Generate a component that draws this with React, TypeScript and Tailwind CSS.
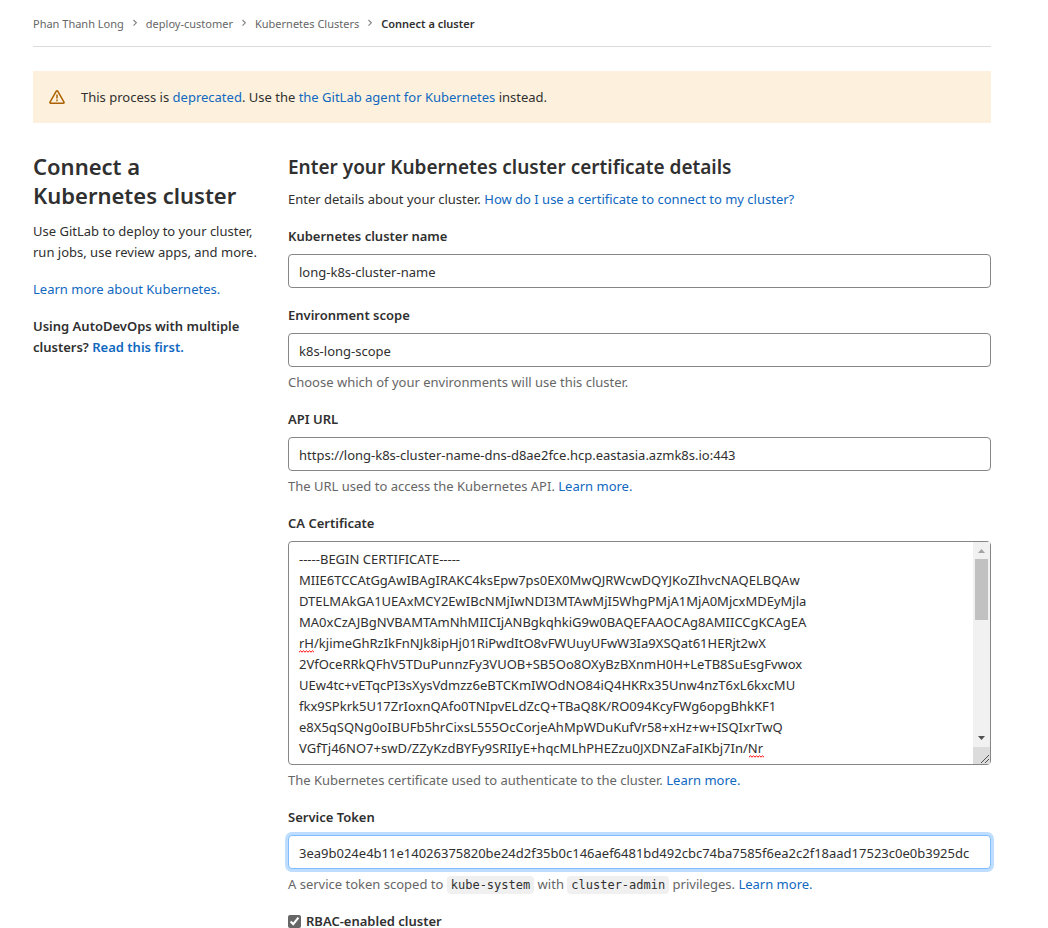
import { useEffect, useRef, type ReactNode } from "react";

const certificate = [
  "-----BEGIN CERTIFICATE-----",
  "MIIE6TCCAtGgAwIBAgIRAKC4ksEpw7ps0EX0MwQJRWcwDQYJKoZIhvcNAQELBQAw",
  "DTELMAkGA1UEAxMCY2EwIBcNMjIwNDI3MTAwMjI5WhgPMjA1MjA0MjcxMDEyMjla",
  "MA0xCzAJBgNVBAMTAmNhMIICIjANBgkqhkiG9w0BAQEFAAOCAg8AMIICCgKCAgEA",
  "rH/kjimeGhRzIkFnNJk8ipHj01RiPwdItO8vFWUuyUFwW3Ia9XSQat61HERjt2wX",
  "2VfOceRRkQFhV5TDuPunnzFy3VUOB+SB5Oo8OXyBzBXnmH0H+LeTB8SuEsgFvwox",
  "UEw4tc+vETqcPI3sXysVdmzz6eBTCKmIWOdNO84iQ4HKRx35Unw4nzT6xL6kxcMU",
  "fkx9SPkrk5U17ZrIoxnQAfo0TNIpvELdZcQ+TBaQ8K/RO094KcyFWg6opgBhkKF1",
  "e8X5qSQNg0oIBUFb5hrCixsL555OcCorjeAhMpWDuKufVr58+xHz+w+ISQIxrTwQ",
  "VGfTj46NO7+swD/ZZyKzdBYFy9SRIIyE+hqcMLhPHEZzu0JXDNZaFaIKbj7In/Nr",
].join("\n");

const token =
  "3ea9b024e4b11e14026375820be24d2f35b0c146aef6481bd492cbc74ba7585f6ea2c2f18aad17523c0e0b3925dc";

const inputClass =
  "block h-[34px] w-full rounded border border-[#868686] bg-white px-[10px] pt-[2px] text-[13px] text-[#303030] outline-none";

function Link({ children }: { children: ReactNode }) {
  return (
    <a href="#" className="text-[#1068bf] hover:underline">
      {children}
    </a>
  );
}

function Field({ id, label, help, children }: { id: string; label: string; help?: ReactNode; children: ReactNode }) {
  return (
    <div className={help ? "mb-4" : "mb-[17px]"}>
      <label htmlFor={id} className="mb-[7px] block font-semibold">
        {label}
      </label>
      {children}
      {help && <p className="mt-[5px] text-[#666666]">{help}</p>}
    </div>
  );
}

function Chevron() {
  return (
    <svg className="mx-[7px] size-2" viewBox="0 0 8 8" fill="none" stroke="#868686" strokeWidth="1.2" aria-hidden="true">
      <path d="M2.5 1 5.3 3.8 2.5 6.6" />
    </svg>
  );
}

function Squiggle() {
  return (
    <svg width="15" height="3" viewBox="0 0 15 3" fill="none" stroke="#ff0000" aria-hidden="true">
      <path d="M0 2.2 1.5.8 3 2.2 4.5.8 6 2.2 7.5.8 9 2.2 10.5.8 12 2.2 13.5.8 15 2.2" />
    </svg>
  );
}

function ScrollBar() {
  return (
    <div className="absolute inset-y-px right-px flex w-[17px] flex-col bg-[#f1f1f1]" aria-hidden="true">
      <svg width="17" height="17" viewBox="0 0 17 17">
        <path d="M5 11h7L8.500 7z" fill="#a3a3a3" />
      </svg>
      <div className="mx-[2px] h-[61px] bg-[#c1c1c1]" />
      <div className="flex-1" />
      <svg width="17" height="17" viewBox="0 0 17 17">
        <path d="M5 6h7L8.500 10z" fill="#505050" />
      </svg>
      <svg width="17" height="17" viewBox="0 0 17 17" className="bg-[#dcdcdc]">
        <path d="M8 16 16 8M12 16l4-4" stroke="#505050" fill="none" />
      </svg>
    </div>
  );
}

function Code({ children }: { children: string }) {
  return (
    <code className="rounded bg-[#f0f0f0] px-1 py-[2px] font-['DejaVu_Sans_Mono',monospace] text-xs text-[#303030]">
      {children}
    </code>
  );
}

export default function App() {
  const tokenRef = useRef<HTMLInputElement>(null);

  useEffect(() => {
    if (tokenRef.current) tokenRef.current.scrollLeft = tokenRef.current.scrollWidth;
  }, []);

  return (
    <div className="bg-white pr-[57px] pl-[33px] font-['Noto_Sans',sans-serif] text-[13px] leading-[21px] text-[#303030]">
      <nav aria-label="Breadcrumb" className="flex h-[47px] items-center border-b border-[#dbdbdb] text-[11px] text-[#666666]">
        <a href="#">Phan Thanh Long</a>
        <Chevron />
        <a href="#">deploy-customer</a>
        <Chevron />
        <a href="#">Kubernetes Clusters</a>
        <Chevron />
        <a href="#" className="font-semibold text-[#303030]">
          Connect a cluster
        </a>
      </nav>

      <div role="alert" className="mt-6 flex h-[52px] items-center gap-4 bg-[#fdf1dd] px-4">
        <svg width="16" height="16" viewBox="0 0 16 16" fill="none" stroke="#ab6100" strokeWidth="1.500" strokeLinejoin="round" aria-hidden="true">
          <path d="M7.300 2.200a.8.8 0 0 1 1.400 0l6.300 10.900a.8.8 0 0 1-.7 1.200H1.700a.8.8 0 0 1-.7-1.200z" />
          <path d="M8 5.500v4M8 10.600v1.600" />
        </svg>
        <p>
          This process is <Link>deprecated</Link>. Use the <Link>the GitLab agent for Kubernetes</Link> instead.
        </p>
      </div>

      <div className="mt-[29px] flex gap-[15px]">
        <aside className="w-[240px] shrink-0">
          <h1 className="text-[22px] leading-[29px] font-semibold">
            Connect a<br />Kubernetes cluster
          </h1>
          <p className="mt-[11px]">
            Use GitLab to deploy to your cluster, run jobs, use review apps, and more.
          </p>
          <p className="mt-4">
            <Link>Learn more about Kubernetes.</Link>
          </p>
          <p className="mt-4 font-semibold">
            Using AutoDevOps with multiple
            <br />
            clusters? <Link>Read this first.</Link>
          </p>
        </aside>

        <main className="min-w-0 flex-1 pb-2">
          <h2 className="mt-[3px] text-[19px] leading-6 font-semibold">Enter your Kubernetes cluster certificate details</h2>
          <p className="mt-[10px] mb-4">
            Enter details about your cluster. <Link>How do I use a certificate to connect to my cluster?</Link>
          </p>

          <Field id="name" label="Kubernetes cluster name">
            <input id="name" className={inputClass} defaultValue="long-k8s-cluster-name" spellCheck={false} />
          </Field>
          <Field id="scope" label="Environment scope" help="Choose which of your environments will use this cluster.">
            <input id="scope" className={inputClass} defaultValue="k8s-long-scope" spellCheck={false} />
          </Field>
          <Field id="api" label="API URL" help={<>The URL used to access the Kubernetes API. <Link>Learn more.</Link></>}>
            <input
              id="api"
              className={inputClass}
              defaultValue="https://long-k8s-cluster-name-dns-d8ae2fce.hcp.eastasia.azmk8s.io:443"
              spellCheck={false}
            />
          </Field>
          <Field
            id="cert"
            label="CA Certificate"
            help={<>The Kubernetes certificate used to authenticate to the cluster. <Link>Learn more.</Link></>}
          >
            <div className="relative">
              <textarea
                id="cert"
                rows={10}
                wrap="off"
                spellCheck={false}
                className="block w-full resize-none overflow-hidden rounded border border-[#868686] pt-[7px] pr-[27px] pb-[5px] pl-[10px] outline-none"
                defaultValue={certificate}
              />
              <div className="pointer-events-none absolute top-[109px] left-[11px]">
                <Squiggle />
              </div>
              <div className="pointer-events-none absolute top-[214px] left-[461px]">
                <Squiggle />
              </div>
              <ScrollBar />
            </div>
          </Field>
          <Field
            id="token"
            label="Service Token"
            help={
              <>
                A service token scoped to <Code>kube-system</Code> with <Code>cluster-admin</Code> privileges.{" "}
                <Link>Learn more.</Link>
              </>
            }
          >
            <input
              id="token"
              ref={tokenRef}
              className="block h-[34px] w-full rounded border border-[#80bdff] bg-white px-[10px] pt-[2px] text-[13px] text-[#303030] shadow-[0_0_0_3px_#bfdeff] outline-none"
              defaultValue={token}
              spellCheck={false}
            />
          </Field>
          <label className="flex items-center gap-[5px] font-semibold">
            <input type="checkbox" defaultChecked className="size-[13px] accent-[#666666]" />
            RBAC-enabled cluster
          </label>
        </main>
      </div>
    </div>
  );
}
